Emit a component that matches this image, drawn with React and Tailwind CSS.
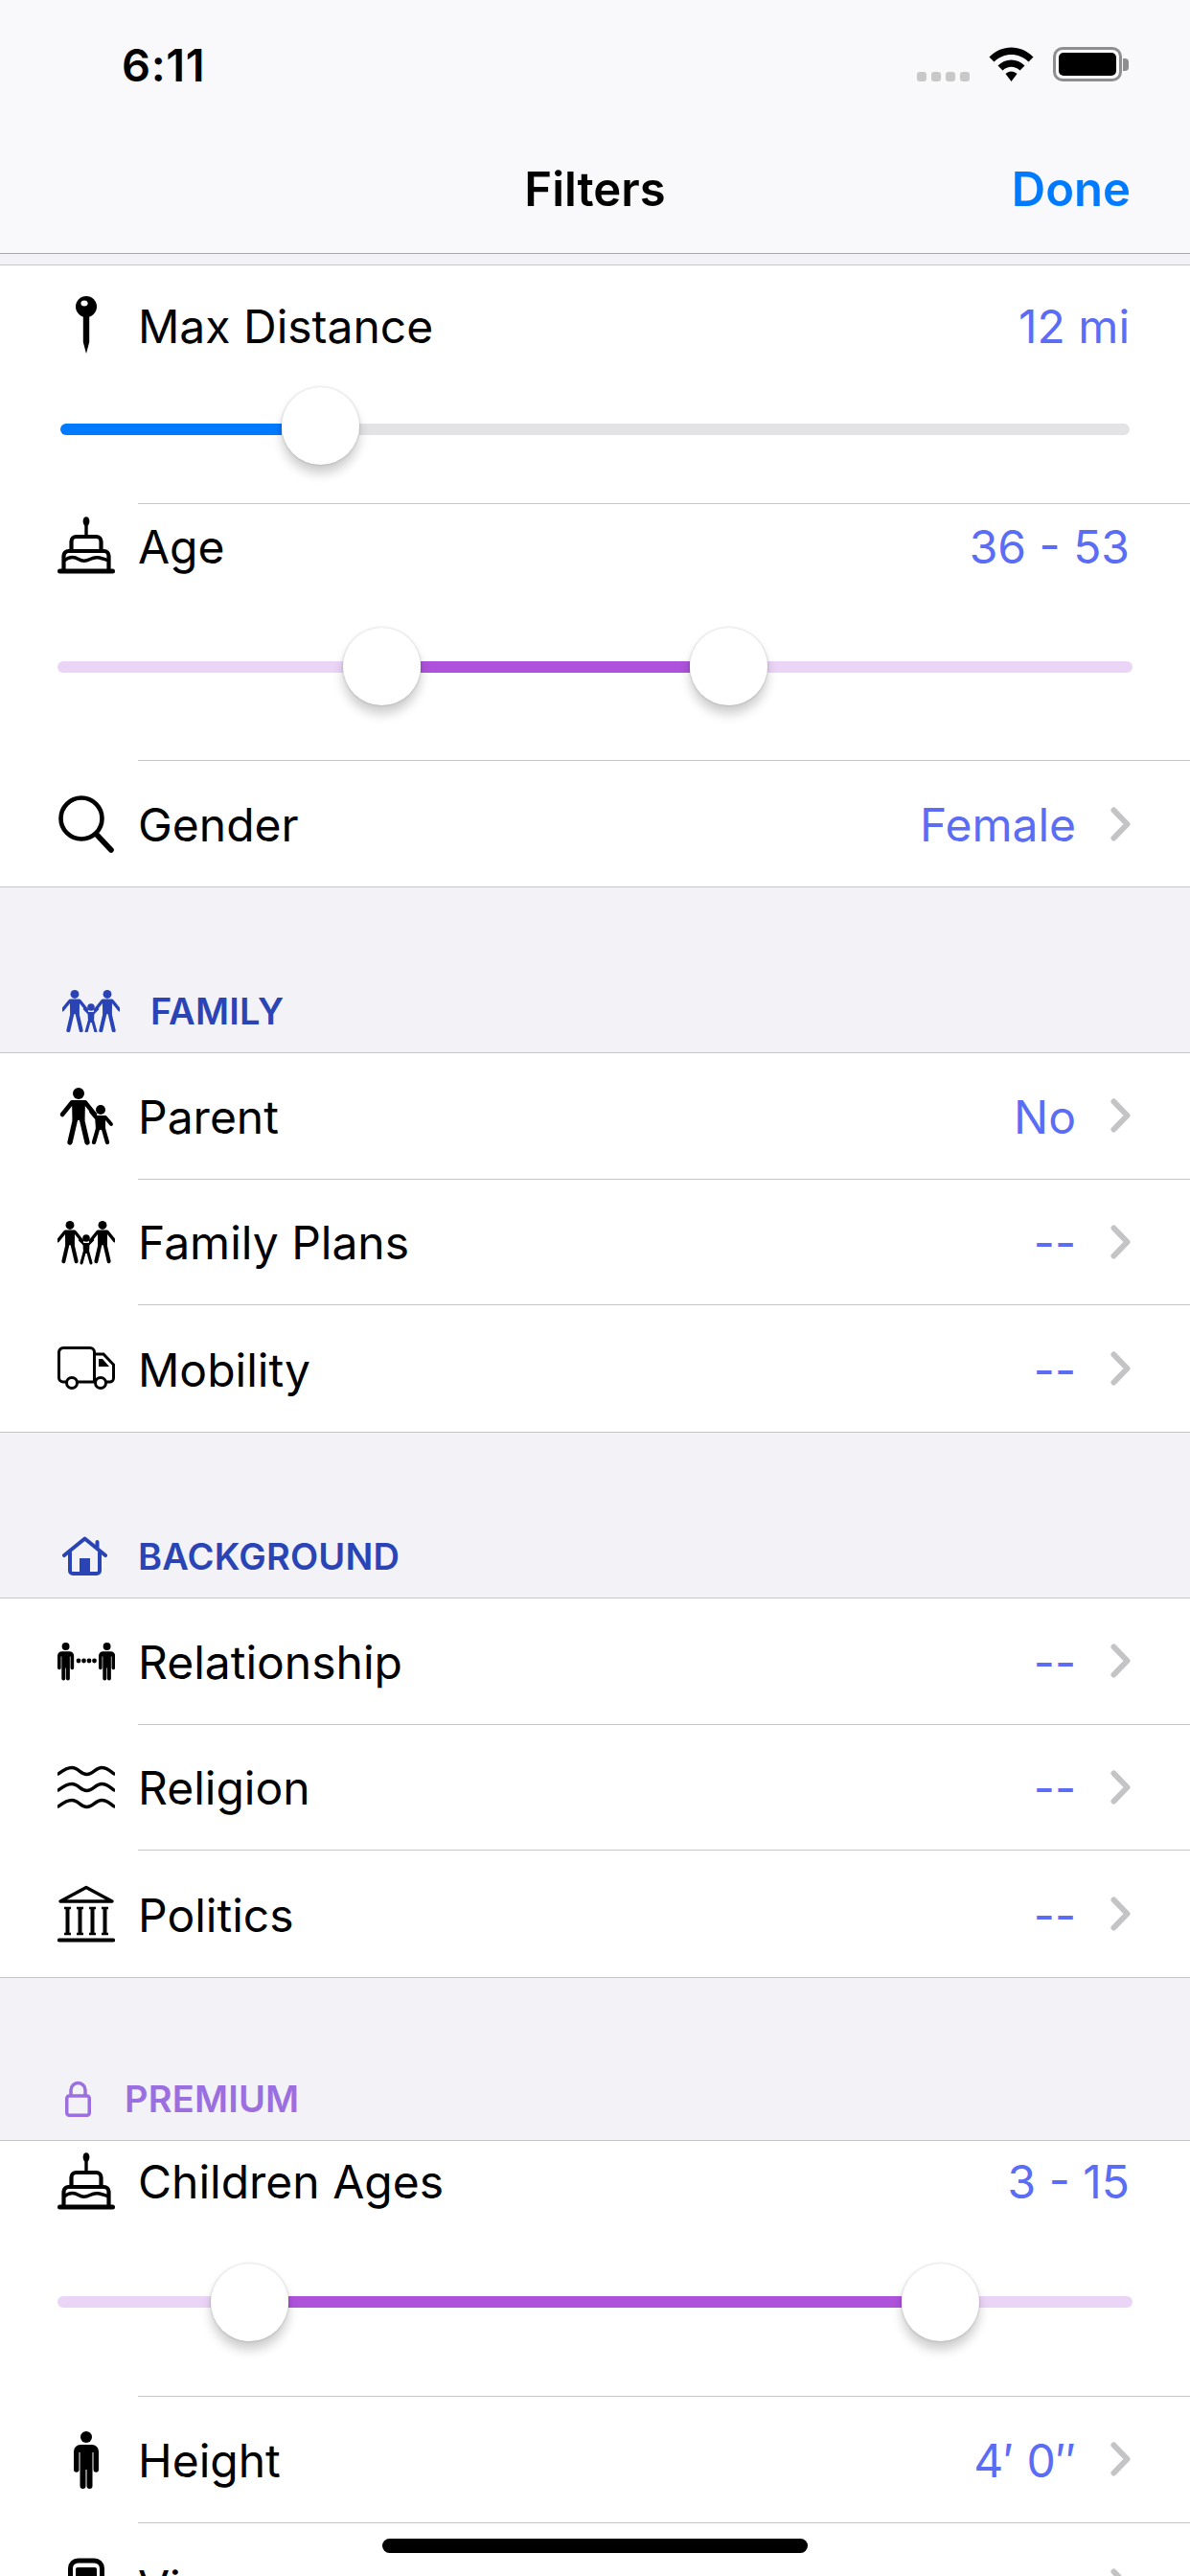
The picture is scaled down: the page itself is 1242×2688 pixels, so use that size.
import React from "react";

const Adult = ({ x = 0, y = 0, s = 1 }) => (
  <g transform={`translate(${x} ${y}) scale(${s})`}>
    <circle cx="0" cy="6" r="6" />
    <path d="M-7 13H7L6.5 34H-6.5Z" strokeLinejoin="round" />
    <path d="M-3 31L-9 57M3 31L9 57" stroke="currentColor" strokeWidth="5.4" strokeLinecap="round" fill="none" />
    <path d="M-7 15.5L-17 28M7 15.5L17 28" stroke="currentColor" strokeWidth="4.6" strokeLinecap="round" fill="none" />
  </g>
);

const Standing = ({ x = 0, y = 0, s = 1 }) => (
  <g transform={`translate(${x} ${y}) scale(${s})`}>
    <circle cx="13" cy="6" r="6" />
    <path d="M0 21a7 7 0 0 1 7-7h12a7 7 0 0 1 7 7v19a2.75 2.75 0 0 1-5.5 0V22H19.500V57a3 3 0 0 1-6 0V40h-1v17a3 3 0 0 1-6 0V22H5.500v18a2.750 2.750 0 0 1-5.500 0Z" />
  </g>
);

const Pin = () => (
  <svg viewBox="0 0 60 60" className="w-[60px] h-[60px]">
    <circle cx="30" cy="11" r="11" />
    <path d="M26.800 18V48L30 60L33.200 48V18Z" />
    <ellipse cx="28" cy="7.500" rx="3.600" ry="3" fill="white" />
  </svg>
);

const Cake = () => (
  <svg viewBox="0 0 60 60" className="w-[60px] h-[60px]">
    <ellipse cx="30" cy="5" rx="3.400" ry="4.800" />
    <path d="M30 8V20" stroke="black" strokeWidth="3.400" />
    <path d="M14.500 36V26a5 5 0 0 1 5-5h21a5 5 0 0 1 5 5v10" stroke="black" strokeWidth="4.200" fill="none" />
    <path d="M6.500 56V41a5 5 0 0 1 5-5h37a5 5 0 0 1 5 5v15" stroke="black" strokeWidth="4.200" fill="none" />
    <path d="M7 46C13 41 18 42 22 44.500S29 47 34 44.500S43 42 53 46" stroke="black" strokeWidth="3.400" fill="none" />
    <rect x="0" y="54.500" width="60" height="5" rx="2.500" />
  </svg>
);

const Search = () => (
  <svg viewBox="0 0 60 60" className="w-[60px] h-[60px]" fill="none" stroke="black">
    <circle cx="25" cy="24" r="21.500" strokeWidth="4.600" />
    <path d="M41 41L56 57" strokeWidth="5.600" strokeLinecap="round" />
  </svg>
);

const Parent = () => (
  <svg viewBox="0 0 60 60" className="w-[60px] h-[60px] text-black" fill="currentColor" stroke="currentColor" strokeWidth="0">
    <Adult x={22} y={0} />
    <g transform="translate(45 18)">
      <circle cx="0" cy="5" r="5" />
      <path d="M-6 11H5L5 26H-5Z" />
      <path d="M-3 25L-7 39M3 25L7 39" stroke="currentColor" strokeWidth="4.400" strokeLinecap="round" fill="none" />
      <path d="M-5 13L-10 7M5 13L11 20" stroke="currentColor" strokeWidth="3.800" strokeLinecap="round" fill="none" />
    </g>
  </svg>
);

const FamilyFigures = () => (
  <>
    <Adult x={13} y={0} s={0.74} />
    <Adult x={47} y={0} s={0.74} />
    <g transform="translate(30 14)">
      <circle cx="0" cy="4" r="3.800" />
      <path d="M-3.500 9H3.500L3 20H-3Z" />
      <path d="M-2 19L-5 30M2 19L5 30" stroke="currentColor" strokeWidth="3" strokeLinecap="round" fill="none" />
      <path d="M-3 10L-7 6M3 10L7 6" stroke="currentColor" strokeWidth="2.400" strokeLinecap="round" fill="none" />
    </g>
  </>
);

const Family = () => (
  <svg viewBox="0 0 60 60" className="w-[60px] h-[60px] text-black" fill="currentColor">
    <g transform="translate(0 8)">
      <FamilyFigures />
    </g>
  </svg>
);

const Truck = () => (
  <svg viewBox="0 0 60 60" className="w-[60px] h-[60px]" fill="none" stroke="black" strokeWidth="3">
    <path d="M9.500 44H6a4.500 4.500 0 0 1-4.500-4.500V13A4.500 4.500 0 0 1 6 8.500H34a4.500 4.500 0 0 1 4.500 4.500V44H21" />
    <path d="M38.500 15H48L58.500 26V40a4 4 0 0 1-4 4H51" />
    <path d="M38.500 44H39.500" />
    <circle cx="15" cy="45" r="5.500" />
    <circle cx="45" cy="45" r="5.500" />
    <path d="M43 20H47L54 28H43Z" fill="black" strokeWidth="0" />
  </svg>
);

const Relationship = () => (
  <svg viewBox="0 0 60 60" className="w-[60px] h-[60px]">
    <Standing x={0} y={10} s={0.66} />
    <Standing x={43} y={10} s={0.66} />
    <circle cx="22" cy="29" r="2.400" />
    <circle cx="27.500" cy="29" r="2.400" />
    <circle cx="33" cy="29" r="2.400" />
    <circle cx="38.500" cy="29" r="2.400" />
  </svg>
);

const Waves = () => (
  <svg viewBox="0 0 60 60" className="w-[60px] h-[60px]" fill="none" stroke="black" strokeWidth="3.400" strokeLinecap="round">
    <path d="M1 16C5 13 9 9.500 15 9.500C22 9.500 24 16.500 30.500 16.500C37 16.500 40 9.500 46 9.500C52 9.500 55 13 59 16" />
    <path d="M1 33C5 30 9 26.500 15 26.500C22 26.500 24 33.500 30.500 33.500C37 33.500 40 26.500 46 26.500C52 26.500 55 30 59 33" />
    <path d="M1 50C5 47 9 43.500 15 43.500C22 43.500 24 50.500 30.500 50.500C37 50.500 40 43.500 46 43.500C52 43.500 55 47 59 50" />
  </svg>
);

const Politics = () => (
  <svg viewBox="0 0 60 60" className="w-[60px] h-[60px]" fill="none" stroke="black">
    <path d="M30 2.500L3 17H57Z" strokeWidth="3.400" strokeLinejoin="round" />
    <path d="M7 24H14M20 24H27M33 24H40M46 24H53M7 51H14M20 51H27M33 51H40M46 51H53" strokeWidth="2.600" />
    <path d="M10.500 24V51M23.500 24V51M36.500 24V51M49.500 24V51" strokeWidth="4" />
    <path d="M2 57.500H58" strokeWidth="4.200" strokeLinecap="round" />
  </svg>
);

const Person = () => (
  <svg viewBox="0 0 60 60" className="w-[60px] h-[60px]">
    <Standing x={17} y={0} s={1} />
  </svg>
);

const Vices = () => (
  <svg viewBox="0 0 60 60" className="w-[60px] h-[60px]">
    <rect x="13.500" y="3" width="33" height="54" rx="8" fill="none" stroke="black" strokeWidth="5" />
    <rect x="19" y="10" width="22" height="22" rx="2" />
  </svg>
);

const Chevron = () => (
  <svg viewBox="0 0 21 36" className="w-[21px] h-[36px] shrink-0" fill="none" stroke="#c4c4c6" strokeWidth="6" strokeLinecap="round" strokeLinejoin="round">
    <path d="M3.500 3.500L17.500 18L3.500 32.500" />
  </svg>
);

function Row({ icon, label, value, last, height = "h-[131.67px]" }) {
  return (
    <div className={`flex ${height}`}>
      <div className="w-[144px] pl-[60px] flex items-center shrink-0">{icon}</div>
      <div className={`flex-1 flex items-center pr-[62px] ${last ? "" : "border-b border-[#c6c6c8]"}`}>
        <span className="flex-1 mt-[3px] text-[48px] text-black">{label}</span>
        <span className="mt-[3px] text-[48px] text-[#5b6cf5] mr-[36px]">{value}</span>
        <Chevron />
      </div>
    </div>
  );
}

const Thumb = () => (
  <div className="w-[81px] h-[81px] rounded-full bg-white shrink-0 z-10 shadow-[0_9px_12px_rgba(0,0,0,0.2),0_0_3px_rgba(0,0,0,0.2)]" />
);

function LabelLine({ icon, label, value, height }) {
  return (
    <div className={`flex items-center pl-[60px] pr-[63px] ${height}`}>
      <div className="w-[84px] shrink-0">{icon}</div>
      <span className="flex-1 mt-[3px] text-[48px] text-black">{label}</span>
      <span className="mt-[3px] text-[48px] text-[#5b6cf5]">{value}</span>
    </div>
  );
}

function Header({ height, color, icon, gap, children }) {
  return (
    <div className={`flex items-end bg-[#f2f2f7] border-t border-b border-[#c6c6c8] ${height}`}>
      <div className="flex items-center h-[46px] mb-[20px]">
        {icon}
        <span className={`text-[38px] font-semibold tracking-[0.2px] ${color} ${gap}`}>{children}</span>
      </div>
    </div>
  );
}

export default function App() {
  return (
    <div className="relative w-[1242px] h-[2688px] overflow-hidden bg-white font-['Inter','Noto_Sans',sans-serif]">
      <div className="bg-[#f9f9fb] h-[265px] border-b border-[#a9a9ac]">
        <div className="h-[136px] flex items-center justify-between pl-[127px] pr-[64px]">
          <span className="text-[47px] font-semibold tracking-[0.6px] text-black">6:11</span>
          <div className="flex items-center mb-[2px]">
            <div className="flex gap-[5px] self-end">
              <div className="w-[10px] h-[10px] rounded-[3px] bg-[#c8c8c8]" />
              <div className="w-[10px] h-[10px] rounded-[3px] bg-[#c8c8c8]" />
              <div className="w-[10px] h-[10px] rounded-[3px] bg-[#c8c8c8]" />
              <div className="w-[10px] h-[10px] rounded-[3px] bg-[#c8c8c8]" />
            </div>
            <svg viewBox="0 0 47 36" className="w-[47px] h-[36px] ml-[20px]">
              <path d="M0.500 10.500C13 -3 34 -3 46.500 10.500L41.500 15.500C31.500 5.500 15.500 5.500 5.500 15.500Z" />
              <path d="M9.500 19.500C17 11.500 30 11.500 37.500 19.500L32.500 24.500C27 19.500 20 19.500 14.500 24.500Z" />
              <path d="M17.500 28C21 24.500 26 24.500 29.500 28L23.500 36Z" />
            </svg>
            <div className="flex items-center ml-[20px]">
              <div className="w-[72px] h-[36px] rounded-[10px] border-[3px] border-[#8e8e90] p-[3px]">
                <div className="w-full h-full rounded-[5px] bg-black" />
              </div>
              <div className="w-[6px] h-[13px] rounded-r-[4px] bg-[#8e8e90] ml-[1px]" />
            </div>
          </div>
        </div>
        <div className="h-[122px] grid grid-cols-[1fr_auto_1fr] items-center px-[62px]">
          <div />
          <span className="mt-[2px] text-[49px] font-semibold text-black">Filters</span>
          <span className="mt-[2px] justify-self-end text-[49px] font-semibold text-[#007aff]">Done</span>
        </div>
      </div>
      <div className="h-[12px] bg-[#f2f2f7] border-b border-[#c6c6c8]" />

      {/* max distance has the only single-thumb slider */}
      <div className="flex flex-col h-[249px]">
        <LabelLine icon={<Pin />} label="Max Distance" value="12 mi" height="h-[124px]" />
        <div className="flex items-start px-[63px] mt-[3px]">
          <div className="w-[231px] h-[12px] mt-[38px] rounded-l-full bg-[#007aff]" />
          <Thumb />
          <div className="flex-1 h-[12px] mt-[38px] rounded-r-full bg-[#e3e3e6]" />
        </div>
        <div className="mt-auto ml-[144px] border-b border-[#c6c6c8]" />
      </div>

      <div className="flex flex-col h-[268px]">
        <LabelLine icon={<Cake />} label="Age" value="36 - 53" height="h-[86px]" />
        <div className="flex items-center px-[60px] mt-[43px]">
          <div className="w-[298px] h-[12px] rounded-l-full bg-[#ebd5f7]" />
          <Thumb />
          <div className="w-[281px] h-[12px] bg-[#ae52dc]" />
          <Thumb />
          <div className="flex-1 h-[12px] rounded-r-full bg-[#ebd5f7]" />
        </div>
        <div className="mt-auto ml-[144px] border-b border-[#c6c6c8]" />
      </div>
      <Row icon={<Search />} label="Gender" value="Female" last height="h-[131px]" />

      <Header height="h-[174px]" color="text-[#2a44b5]" gap="ml-[32px]" icon={
        <svg viewBox="0 0 60 44" className="w-[60px] h-[44px] ml-[65px] text-[#2a44b5]" fill="currentColor"><FamilyFigures /></svg>
      }>FAMILY</Header>
      <Row icon={<Parent />} label="Parent" value="No" />
      <Row icon={<Family />} label="Family Plans" value="--" />
      <Row icon={<Truck />} label="Mobility" value="--" last />

      <Header height="h-[174px]" color="text-[#2a44b5]" gap="ml-[32px] mt-[2px]" icon={
        <svg viewBox="0 0 47 41" className="w-[47px] h-[41px] ml-[65px]" fill="none" stroke="#2a44b5" strokeWidth="4" strokeLinecap="round" strokeLinejoin="round">
          <path d="M2 20L23.500 2.500L45 20M36.500 6V12" />
          <path d="M8 17V36a3 3 0 0 0 3 3H36a3 3 0 0 0 3-3V17" />
          <rect x="18" y="23" width="11" height="16" fill="#2a44b5" strokeWidth="0" />
        </svg>
      }>BACKGROUND</Header>
      <Row icon={<Relationship />} label="Relationship" value="--" />
      <Row icon={<Waves />} label="Religion" value="--" />
      <Row icon={<Politics />} label="Politics" value="--" last />

      <Header height="h-[171px]" color="text-[#9b6fe0]" gap="ml-[35px] mt-[2px]" icon={
        <svg viewBox="0 0 27 38" className="w-[27px] h-[38px] ml-[68px]" fill="none" stroke="#9b6fe0" strokeWidth="3.500" strokeLinejoin="round">
          <path d="M6 17V10a7.500 7.500 0 0 1 15 0V17" />
          <rect x="1.750" y="16" width="23.500" height="20.250" rx="2.500" />
        </svg>
      }>PREMIUM</Header>

      <div className="flex flex-col h-[267px]">
        <LabelLine icon={<Cake />} label="Children Ages" value="3 - 15" height="h-[84px]" />
        <div className="flex items-center px-[60px] mt-[44px]">
          <div className="w-[160px] h-[12px] rounded-l-full bg-[#ebd5f7]" />
          <Thumb />
          <div className="w-[640px] h-[12px] bg-[#ae52dc]" />
          <Thumb />
          <div className="flex-1 h-[12px] rounded-r-full bg-[#ebd5f7]" />
        </div>
        <div className="mt-auto ml-[144px] border-b border-[#c6c6c8]" />
      </div>
      <Row icon={<Person />} label="Height" value={"4′ 0″"} height="h-[132px]" />
      <Row icon={<Vices />} label="Vices" value="--" />

      <div className="absolute left-[399px] top-[2649px] w-[444px] h-[15px] rounded-full bg-black" />
    </div>
  );
}
